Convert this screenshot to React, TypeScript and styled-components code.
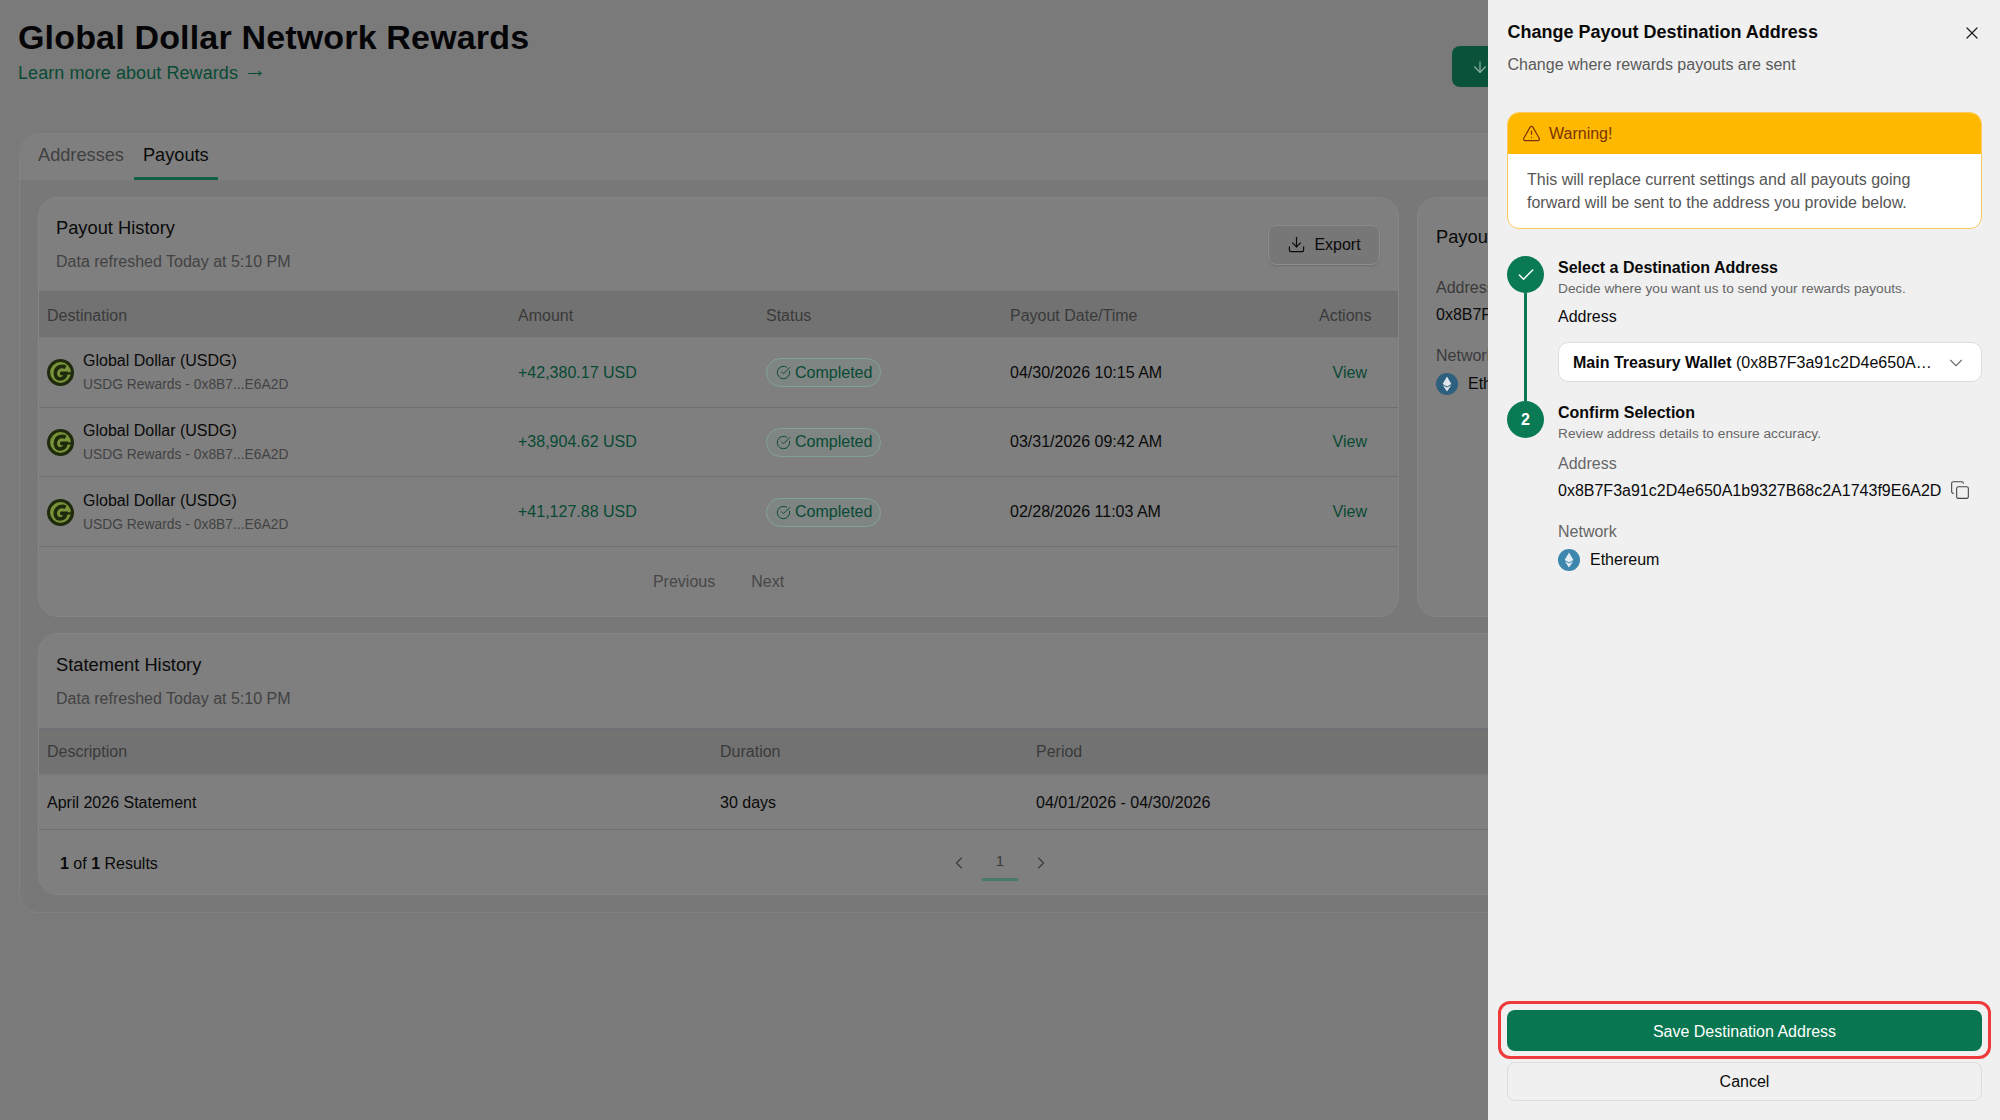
import styled, { createGlobalStyle } from "styled-components"
import { ArrowDown, Check, ChevronDown, ChevronLeft, ChevronRight, CircleCheckBig, Copy, Download, TriangleAlert, X } from "lucide-react"

const payouts = [
  { amount: "+42,380.17 USD", date: "04/30/2026 10:15 AM" },
  { amount: "+38,904.62 USD", date: "03/31/2026 09:42 AM" },
  { amount: "+41,127.88 USD", date: "02/28/2026 11:03 AM" },
]

function UsdgLogo() {
  return (
    <svg width="27" height="27" viewBox="0 0 27 27">
      <circle cx="13.5" cy="13.5" r="13.5" fill="#1e2a0b" />
      <circle cx="13.5" cy="13.5" r="10.4" fill="#789339" />
      <path d="M18.6 8.4C15 6.2 10 7.6 8.6 12.2 7.4 16.4 9.6 20 13 20 16.2 20 18.4 17.6 19 14.4H13.6" fill="none" stroke="#1e2a0b" strokeWidth="3.6" />
      <path d="M13 14.4H24" fill="none" stroke="#1e2a0b" strokeWidth="2.2" />
    </svg>
  )
}

function EthLogo({ color }: { color: string }) {
  return (
    <svg width="22" height="22" viewBox="0 0 22 22">
      <circle cx="11" cy="11" r="11" fill={color} />
      <polygon points="11,3.5 15.4,11 11,13.4 6.6,11" fill="#fff" fillOpacity="0.85" />
      <polygon points="11,14.6 15.2,12.2 11,18.5 6.8,12.2" fill="#fff" fillOpacity="0.85" />
    </svg>
  )
}

function App() {
  return (
    <>
      <GlobalStyle />
      <Page>
        <PageHeader>
          <div>
            <PageTitle>Global Dollar Network Rewards</PageTitle>
            <LearnLink>Learn more about Rewards <LinkArrow>→</LinkArrow></LearnLink>
          </div>
          <TopAction><ArrowDown size={18} strokeWidth={1.6} /></TopAction>
        </PageHeader>

        <OuterCard>
          <Tabs>
            <Tab>Addresses</Tab>
            <Tab $active>Payouts</Tab>
          </Tabs>
          <TabBody>
            <TopGrid>
              <Card>
                <CardHead>
                  <div>
                    <CardTitle>Payout History</CardTitle>
                    <CardSub>Data refreshed Today at 5:10 PM</CardSub>
                  </div>
                  <ExportButton><Download size={19} strokeWidth={1.5} />Export</ExportButton>
                </CardHead>
                <PayoutRow $head>
                  <span>Destination</span>
                  <span>Amount</span>
                  <span>Status</span>
                  <span>Payout Date/Time</span>
                  <span>Actions</span>
                </PayoutRow>
                {payouts.map((p) => (
                  <PayoutRow key={p.date}>
                    <Destination>
                      <UsdgLogo />
                      <div>
                        <DestName>Global Dollar (USDG)</DestName>
                        <DestSub>USDG Rewards - 0x8B7...E6A2D</DestSub>
                      </div>
                    </Destination>
                    <GreenText>{p.amount}</GreenText>
                    <div>
                      <StatusPill><CircleCheckBig size={15} strokeWidth={1.5} />Completed</StatusPill>
                    </div>
                    <span>{p.date}</span>
                    <ViewLink>View</ViewLink>
                  </PayoutRow>
                ))}
                <PrevNext>
                  <span>Previous</span>
                  <span>Next</span>
                </PrevNext>
              </Card>

              <SideCard>
                <SideTitle>Payout Destination</SideTitle>
                <SideLabel>Address</SideLabel>
                <SideValue>0x8B7F3a91c2D4e650A1b9327B68c2A1743f9E6A2D</SideValue>
                <SideLabel>Network</SideLabel>
                <NetworkRow><EthLogo color="#2c607e" />Ethereum</NetworkRow>
              </SideCard>
            </TopGrid>

            <Card>
              <CardHead $tall>
                <div>
                  <CardTitle>Statement History</CardTitle>
                  <CardSub>Data refreshed Today at 5:10 PM</CardSub>
                </div>
              </CardHead>
              <StatementRow $head>
                <span>Description</span>
                <span>Duration</span>
                <span>Period</span>
              </StatementRow>
              <StatementRow>
                <span>April 2026 Statement</span>
                <span>30 days</span>
                <span>04/01/2026 - 04/30/2026</span>
              </StatementRow>
              <StatementFooter>
                <Results><b>1</b> of <b>1</b> Results</Results>
                <Pager>
                  <ChevronLeft size={20} strokeWidth={1.3} />
                  <PageNumber>1</PageNumber>
                  <ChevronRight size={20} strokeWidth={1.3} />
                </Pager>
              </StatementFooter>
            </Card>
          </TabBody>
        </OuterCard>
      </Page>

      <Panel>
        <CloseButton><X size={20} strokeWidth={1.5} /></CloseButton>
        <PanelTitle>Change Payout Destination Address</PanelTitle>
        <PanelSub>Change where rewards payouts are sent</PanelSub>

        <Warning>
          <WarningHead><TriangleAlert size={19} strokeWidth={1.5} />Warning!</WarningHead>
          <WarningBody>This will replace current settings and all payouts going forward will be sent to the address you provide below.</WarningBody>
        </Warning>

        <Step $first>
          <Rail>
            <StepDot><Check size={20} strokeWidth={1.8} /></StepDot>
            <RailLine />
          </Rail>
          <div>
            <StepTitle>Select a Destination Address</StepTitle>
            <StepSub>Decide where you want us to send your rewards payouts.</StepSub>
            <FieldLabel>Address</FieldLabel>
            <SelectBox>
              <SelectText><b>Main Treasury Wallet</b> (0x8B7F3a91c2D4e650A1b9327B68c2A1743f9E6A2D)</SelectText>
              <ChevronDown size={22} strokeWidth={1.2} color="#6f6f6f" />
            </SelectBox>
          </div>
        </Step>

        <Step>
          <Rail>
            <StepDot>2</StepDot>
          </Rail>
          <div>
            <StepTitle>Confirm Selection</StepTitle>
            <StepSub>Review address details to ensure accuracy.</StepSub>
            <ReviewLabel>Address</ReviewLabel>
            <AddressLine>
              0x8B7F3a91c2D4e650A1b9327B68c2A1743f9E6A2D
              <Copy size={20} strokeWidth={1.3} color="#444" />
            </AddressLine>
            <ReviewLabel $wide>Network</ReviewLabel>
            <NetworkRow><EthLogo color="#3d86ad" />Ethereum</NetworkRow>
          </div>
        </Step>

        <PanelFooter>
          <SaveButton>Save Destination Address</SaveButton>
          <CancelButton>Cancel</CancelButton>
        </PanelFooter>
      </Panel>
    </>
  )
}

const GlobalStyle = createGlobalStyle`
  html, body {
    margin: 0;
    height: 100%;
    overflow: hidden;
    background: #7a7a7a;
  }
  * {
    box-sizing: border-box;
  }
  body {
    font-family: "Liberation Sans", Arial, sans-serif;
    font-size: 16px;
    color: #0a0a0a;
  }
`

const Page = styled.div`
  width: 2000px;
  height: 1120px;
  padding: 0 19px;
  overflow: hidden;
`

const PageHeader = styled.header`
  display: flex;
  justify-content: space-between;
  align-items: flex-start;
  height: 133px;
  padding-top: 17px;
`

const PageTitle = styled.h1`
  margin: 0 0 0 -1px;
  font-size: 34px;
  letter-spacing: 0.17px;
  line-height: 40px;
  font-weight: 700;
  color: #050508;
`

const LearnLink = styled.a`
  display: block;
  margin-left: -1px;
  margin-top: 5px;
  font-size: 18px;
  letter-spacing: 0.08px;
  line-height: 22px;
  color: #094a34;
`

const LinkArrow = styled.span`
  font-size: 23px;
  line-height: 0;
  position: relative;
  top: -2px;
`

const TopAction = styled.button`
  display: flex;
  align-items: center;
  width: 529px;
  height: 41px;
  margin-top: 29px;
  padding: 0 0 0 19px;
  border: 0;
  border-radius: 8px;
  background: #0a5239;
  color: #8fb0a2;
`

const OuterCard = styled.section`
  height: 780px;
  border: 1px solid #828282;
  border-radius: 20px;
  background: #787878;
  overflow: hidden;
`

const Tabs = styled.nav`
  display: flex;
  gap: 1px;
  height: 46px;
  padding-left: 9px;
  background: #7f7f7f;
`

const Tab = styled.div<{ $active?: boolean }>`
  display: flex;
  align-items: center;
  height: 46px;
  padding: 0 9px;
  font-size: 18.2px;
  color: ${(p) => (p.$active ? "#0a0a0a" : "#3f3f3f")};
  border-bottom: 3px solid ${(p) => (p.$active ? "#0f5f45" : "transparent")};
`

const TabBody = styled.div`
  display: flex;
  flex-direction: column;
  gap: 16px;
  padding: 17px 18px;
`

const TopGrid = styled.div`
  display: grid;
  grid-template-columns: 1361px 1fr;
  gap: 18px;
`

const Card = styled.div`
  border: 1px solid #858585;
  border-radius: 20px;
  background: #7f7f7f;
  overflow: hidden;
`

const CardHead = styled.div<{ $tall?: boolean }>`
  display: flex;
  align-items: center;
  justify-content: space-between;
  height: ${(p) => (p.$tall ? 94 : 93)}px;
  padding: ${(p) => (p.$tall ? 2 : 0)}px 18px 0 17px;
`

const CardTitle = styled.h2`
  margin: 0 0 14px;
  font-size: 18.3px;
  line-height: 20px;
  font-weight: 400;
  color: #0a0a0a;
`

const CardSub = styled.div`
  font-size: 16px;
  line-height: 20px;
  color: #424242;
`

const ExportButton = styled.button`
  display: flex;
  align-items: center;
  justify-content: center;
  gap: 8px;
  width: 112px;
  height: 40px;
  border: 1px solid #8c8c8c;
  border-radius: 8px;
  background: #777;
  box-shadow: 0 1px 2px rgba(0, 0, 0, 0.15);
  font: inherit;
  color: #0a0a0a;
`

const PayoutRow = styled.div<{ $head?: boolean }>`
  display: grid;
  grid-template-columns: 471px 248px 244px 309px 1fr;
  align-items: center;
  height: ${(p) => (p.$head ? "47px" : "69.67px")};
  padding: ${(p) => (p.$head ? 2 : 1)}px 27px 0 8px;
  background: ${(p) => (p.$head ? "#727272" : "transparent")};
  border-top: ${(p) => (p.$head ? "1px solid #6e6e78" : "0")};
  border-bottom: 1px solid ${(p) => (p.$head ? "#7a7a7a" : "#6f6f6f")};
  color: ${(p) => (p.$head ? "#3a3a3a" : "#0a0a0a")};
`

const Destination = styled.div`
  display: flex;
  align-items: center;
  gap: 9px;
`

const DestName = styled.div`
  line-height: 20px;
  margin-top: -2px;
  margin-bottom: 5px;
  color: #0a0a0a;
`

const DestSub = styled.div`
  font-size: 13.85px;
  line-height: 16px;
  color: #424242;
`

const GreenText = styled.span`
  color: #094a34;
`

const StatusPill = styled.span`
  display: inline-flex;
  align-items: center;
  gap: 4px;
  height: 29px;
  padding: 0 8px 0 9px;
  border: 1.5px solid #83a295;
  border-radius: 15px;
  background: #7e8583;
  color: #094a34;
`

const ViewLink = styled.span`
  justify-self: end;
  padding-right: 4px;
  color: #094a34;
`

const PrevNext = styled.div`
  display: flex;
  justify-content: center;
  align-items: center;
  gap: 36px;
  height: 69px;
  padding-top: 2px;
  color: #474747;
`

const SideCard = styled(Card)`
  padding: 29px 18px 0;
`

const SideTitle = styled.h2`
  margin: 0 0 31px;
  font-size: 18.3px;
  line-height: 20px;
  font-weight: 400;
  color: #0a0a0a;
`

const SideLabel = styled.div`
  line-height: 20px;
  color: #3a3a3a;
`

const SideValue = styled.div`
  margin: 7px 0 21px;
  line-height: 20px;
  color: #0a0a0a;
`

const NetworkRow = styled.div`
  display: flex;
  align-items: center;
  gap: 10px;
  margin-top: 7px;
  line-height: 22px;
  color: #0a0a0a;
`

const StatementRow = styled.div<{ $head?: boolean }>`
  display: grid;
  grid-template-columns: 673px 316px 1fr;
  align-items: center;
  height: ${(p) => (p.$head ? 47 : 55)}px;
  padding: 2px 0 0 8px;
  background: ${(p) => (p.$head ? "#727272" : "transparent")};
  border-top: ${(p) => (p.$head ? "1px solid #6e6e78" : "0")};
  border-bottom: 1px solid ${(p) => (p.$head ? "#7a7a7a" : "#6f6f6f")};
  color: ${(p) => (p.$head ? "#3a3a3a" : "#0a0a0a")};
`

const StatementFooter = styled.div`
  display: grid;
  grid-template-columns: 1fr auto 1fr;
  align-items: center;
  height: 64px;
  padding-top: 2px;
`

const Results = styled.div`
  padding: 3px 0 0 21px;
  color: #0a0a0a;
  b {
    font-weight: 700;
  }
`

const Pager = styled.div`
  display: flex;
  align-items: center;
  gap: 13px;
  color: #3a3a3a;
`

const PageNumber = styled.div`
  display: flex;
  align-items: center;
  justify-content: center;
  width: 36px;
  height: 37px;
  padding-bottom: 1px;
  font-size: 15px;
  border-bottom: 3px solid #4b7a67;
`

const Panel = styled.aside`
  position: fixed;
  top: 0;
  right: 0;
  display: flex;
  flex-direction: column;
  width: 512px;
  height: 1120px;
  padding: 21px 18px 19px 19px;
  background: #f0f0f0;
`

const CloseButton = styled.button`
  position: absolute;
  top: 23px;
  right: 18px;
  display: flex;
  padding: 0;
  border: 0;
  background: none;
  color: #222;
`

const PanelTitle = styled.h2`
  margin: 0 0 12px 0.5px;
  font-size: 18px;
  line-height: 22px;
  font-weight: 700;
  color: #0a0a0a;
`

const PanelSub = styled.div`
  margin-left: 0.5px;
  line-height: 20px;
  color: #5a5a5a;
`

const Warning = styled.div`
  margin-top: 37px;
  height: 117px;
  border: 1px solid #fdc95f;
  border-radius: 12px;
  background: #fff;
  overflow: hidden;
`

const WarningHead = styled.div`
  display: flex;
  align-items: center;
  gap: 8px;
  height: 41px;
  padding-left: 14px;
  background: #ffb800;
  color: #7b3306;
`

const WarningBody = styled.div`
  padding: 14px 19px 0;
  line-height: 23px;
  color: #565656;
`

const Step = styled.div<{ $first?: boolean }>`
  display: grid;
  grid-template-columns: 37px minmax(0, 1fr);
  column-gap: 14px;
  margin-top: ${(p) => (p.$first ? 27 : 0)}px;
  height: ${(p) => (p.$first ? "145px" : "auto")};
`

const Rail = styled.div`
  display: flex;
  flex-direction: column;
  align-items: center;
`

const StepDot = styled.div`
  display: flex;
  align-items: center;
  justify-content: center;
  flex: none;
  width: 37px;
  height: 37px;
  border-radius: 50%;
  background: #0a7a55;
  color: #fff;
  font-weight: 700;
`

const RailLine = styled.div`
  flex: 1;
  width: 3px;
  background: #0a7a55;
`

const StepTitle = styled.div`
  margin-top: 2px;
  font-weight: 700;
  line-height: 20px;
  color: #0a0a0a;
`

const StepSub = styled.div`
  margin-top: 3px;
  font-size: 13.7px;
  line-height: 16px;
  color: #666;
`

const FieldLabel = styled.div`
  margin-top: 10px;
  line-height: 20px;
  color: #0a0a0a;
`

const SelectBox = styled.div`
  display: flex;
  align-items: center;
  gap: 13px;
  height: 40px;
  margin-top: 15px;
  padding: 1px 14px 0 14px;
  border: 1px solid #dcdcdc;
  border-radius: 10px;
  background: #fff;
`

const SelectText = styled.div`
  flex: 1;
  min-width: 0;
  white-space: nowrap;
  overflow: hidden;
  text-overflow: ellipsis;
  color: #0a0a0a;
`

const ReviewLabel = styled.div<{ $wide?: boolean }>`
  margin-top: ${(p) => (p.$wide ? 21 : 12)}px;
  line-height: 20px;
  color: #666;
`

const AddressLine = styled.div`
  display: flex;
  align-items: center;
  gap: 9px;
  margin-top: 7px;
  line-height: 20px;
  color: #0a0a0a;
  svg {
    margin-top: -2px;
  }
`

const PanelFooter = styled.div`
  display: flex;
  flex-direction: column;
  gap: 11px;
  margin-top: auto;
`

const SaveButton = styled.button`
  position: relative;
  height: 41px;
  padding-top: 3px;
  border: 0;
  border-radius: 8px;
  background: #087650;
  font: inherit;
  color: #fff;
  &::after {
    content: "";
    position: absolute;
    inset: -9px -9px -8px -9px;
    border: 3px solid #ee3a3a;
    border-radius: 12px;
  }
`

const CancelButton = styled.button`
  height: 39px;
  border: 1px solid #dcdcdc;
  border-radius: 8px;
  background: transparent;
  font: inherit;
  color: #0a0a0a;
`

export default App
